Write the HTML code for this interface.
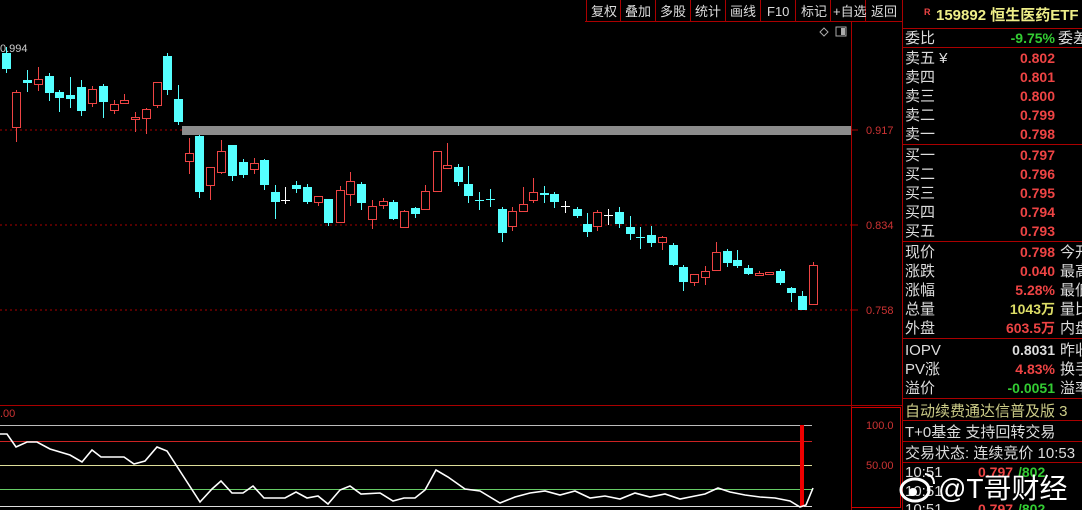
<!DOCTYPE html>
<html><head><meta charset="utf-8"><style>
body{margin:0;background:#000;width:1082px;height:510px;overflow:hidden;position:relative;font-family:"Liberation Sans","Noto Sans CJK SC",sans-serif}
svg{position:absolute;left:0;top:0}
.t{font-family:"Liberation Sans","Noto Sans CJK SC",sans-serif}
</style></head><body>
<svg id="s" width="1082" height="510" xmlns="http://www.w3.org/2000/svg">
<!-- toolbar -->
<line x1="585" y1="21.5" x2="903" y2="21.5" stroke="#a00" />
<g stroke="#a00"><line x1="586.5" y1="0" x2="586.5" y2="21"/><line x1="620.5" y1="0" x2="620.5" y2="21"/><line x1="655.5" y1="0" x2="655.5" y2="21"/><line x1="690.5" y1="0" x2="690.5" y2="21"/><line x1="725.5" y1="0" x2="725.5" y2="21"/><line x1="760.5" y1="0" x2="760.5" y2="21"/><line x1="795.5" y1="0" x2="795.5" y2="21"/><line x1="830.5" y1="0" x2="830.5" y2="21"/><line x1="865.5" y1="0" x2="865.5" y2="21"/></g>
<g fill="#ddd" font-size="13" class="t"><text x="591" y="16">复权</text><text x="625" y="16">叠加</text><text x="660" y="16">多股</text><text x="695" y="16">统计</text><text x="730" y="16">画线</text><text x="767" y="16">F10</text><text x="801" y="16">标记</text><text x="833" y="16">+自选</text><text x="871" y="16">返回</text></g>
<!-- chart frame -->
<line x1="851.5" y1="22" x2="851.5" y2="510" stroke="#a00"/>
<line x1="902.5" y1="0" x2="902.5" y2="510" stroke="#a00"/>
<g stroke="#a00" stroke-dasharray="2,3"><line x1="0" y1="130" x2="851" y2="130"/><line x1="0" y1="225" x2="851" y2="225"/><line x1="0" y1="310" x2="851" y2="310"/></g>
<g stroke="#a00"><line x1="851" y1="130" x2="858" y2="130"/><line x1="851" y1="225" x2="858" y2="225"/><line x1="851" y1="310" x2="858" y2="310"/></g>
<g fill="#c33" font-size="11" class="t"><text x="866" y="134">0.917</text><text x="866" y="229">0.834</text><text x="866" y="314">0.758</text></g>
<text x="0" y="52" fill="#ccc" font-size="11" class="t">0.994</text>
<path d="M824 28 L828 32 L824 36 L820 32Z" fill="none" stroke="#aaa"/>
<rect x="836" y="27" width="10" height="9" fill="none" stroke="#aaa"/><rect x="841" y="28" width="4" height="7" fill="#aaa"/>
<g id="c"></g>
<rect x="182" y="126" width="669" height="9" fill="#8c8c8c"/>
<!-- indicator -->
<line x1="0" y1="405.5" x2="903" y2="405.5" stroke="#a00"/>
<line x1="0" y1="425.5" x2="812" y2="425.5" stroke="#bbb"/>
<line x1="0" y1="441.5" x2="812" y2="441.5" stroke="#c22"/>
<line x1="0" y1="465.5" x2="812" y2="465.5" stroke="#dd9"/>
<line x1="0" y1="489.5" x2="812" y2="489.5" stroke="#6c6"/>
<line x1="0" y1="506.5" x2="812" y2="506.5" stroke="#ddd"/>
<text x="0" y="417" fill="#c33" font-size="11" class="t">.00</text>
<rect x="851.5" y="407.5" width="49" height="100" fill="none" stroke="#c00"/>
<g fill="#c33" font-size="11" class="t"><text x="866" y="429">100.0</text><text x="866" y="469">50.00</text></g>
<rect x="800" y="425" width="4" height="82" fill="#e00"/>
<polyline fill="none" stroke="#fff" stroke-width="1.6" points="0,434 7,434 16,447 27,442 37,442 50,449 70,455 82,462 92,450 101,457 124,457 134,464 145,461 157,447 167,451 200,502 212,489 221,481 232,493 243,493 253,486 264,498 285,498 296,492 307,498 318,496 328,504 340,490 350,486 361,494 380,493 393,501 404,498 415,498 425,490 436,470 448,477 465,489 480,491 500,503 515,497 530,493 545,491 560,495 575,491 590,498 605,496 620,499 635,493 650,497 665,494 680,499 695,496 705,494 718,488 730,492 745,495 760,497 775,498 790,501 800,507 806,505 813,488"/>
<!-- right panel -->
<g stroke="#a00"><line x1="903" y1="28.5" x2="1082" y2="28.5"/><line x1="903" y1="47.5" x2="1082" y2="47.5"/><line x1="903" y1="144.5" x2="1082" y2="144.5"/><line x1="903" y1="241.5" x2="1082" y2="241.5"/><line x1="903" y1="338.5" x2="1082" y2="338.5"/><line x1="903" y1="398.5" x2="1082" y2="398.5"/><line x1="903" y1="420.5" x2="1082" y2="420.5"/><line x1="903" y1="441.5" x2="1082" y2="441.5"/><line x1="903" y1="462.5" x2="1082" y2="462.5"/></g>
<text x="924" y="15" fill="#e44" font-size="9" font-weight="bold" class="t">R</text>
<text x="936" y="20" fill="#ee8" font-size="15" font-weight="bold" class="t">159892 恒生医药ETF</text>
<g fill="#ddd" font-size="15" class="t">
<text x="905" y="43">委比</text><text x="1058" y="43">委差</text>
<text x="905" y="63">卖五 ¥</text><text x="905" y="82">卖四</text><text x="905" y="101">卖三</text><text x="905" y="120">卖二</text><text x="905" y="139">卖一</text>
<text x="905" y="160">买一</text><text x="905" y="179">买二</text><text x="905" y="198">买三</text><text x="905" y="217">买四</text><text x="905" y="236">买五</text>
<text x="905" y="257">现价</text><text x="905" y="276">涨跌</text><text x="905" y="295">涨幅</text><text x="905" y="314">总量</text><text x="905" y="333">外盘</text>
<text x="1060" y="257">今开</text><text x="1060" y="276">最高</text><text x="1060" y="295">最低</text><text x="1060" y="314">量比</text><text x="1060" y="333">内盘</text>
<text x="905" y="355">IOPV</text><text x="905" y="374">PV涨</text><text x="905" y="393">溢价</text>
<text x="1060" y="355">昨收</text><text x="1060" y="374">换手</text><text x="1060" y="393">溢率</text>
<text x="905" y="437">T+0基金 支持回转交易</text>
<text x="905" y="458">交易状态: 连续竞价 10:53</text>
<text x="905" y="477">10:51</text><text x="905" y="496">10:51</text><text x="905" y="514">10:51</text>
</g>
<text x="905" y="416" fill="#cc8" font-size="15" class="t">自动续费通达信普及版 3</text>
<g font-size="14" font-weight="bold" text-anchor="end" class="t">
<text x="1055" y="43" fill="#3c3">-9.75%</text>
<g fill="#e44"><text x="1055" y="63">0.802</text><text x="1055" y="82">0.801</text><text x="1055" y="101">0.800</text><text x="1055" y="120">0.799</text><text x="1055" y="139">0.798</text>
<text x="1055" y="160">0.797</text><text x="1055" y="179">0.796</text><text x="1055" y="198">0.795</text><text x="1055" y="217">0.794</text><text x="1055" y="236">0.793</text>
<text x="1055" y="257">0.798</text><text x="1055" y="276">0.040</text><text x="1055" y="295">5.28%</text><text x="1055" y="333">603.5万</text><text x="1055" y="374">4.83%</text></g>
<text x="1055" y="314" fill="#dd6">1043万</text>
<text x="1055" y="355" fill="#ddd">0.8031</text>
<text x="1055" y="393" fill="#3c3">-0.0051</text>
</g>
<g font-size="14" font-weight="bold" class="t"><text x="978" y="477" fill="#e44">0.797</text><text x="1018" y="477" fill="#3c3">/802</text><text x="978" y="514" fill="#e44">0.797</text><text x="1018" y="514" fill="#3c3">/802</text></g>
<!-- watermark -->
<ellipse cx="915" cy="490" rx="14" ry="11" fill="none" stroke="#fff" stroke-width="3"/>
<circle cx="913" cy="492" r="4" fill="#fff"/>
<path d="M925 474 Q934 475 934 484" fill="none" stroke="#fff" stroke-width="2"/>
<text x="938" y="498" fill="#fff" font-size="28" class="t">@T哥财经</text>
</svg>
<script>
var d=[[6,47,73,53,69,'c'],[16,90,142,92,127,'r'],[27,70,92,80,83,'c'],[38,67,91,79,84,'r'],[49,73,101,76,93,'c'],[59,90,112,92,98,'c'],[70,77,108,95,99,'c'],[81,80,116,87,111,'c'],[92,86,107,89,103,'r'],[103,84,118,86,102,'c'],[114,100,114,104,110,'r'],[124,94,104,100,103,'r'],[135,112,132,117,119,'r'],[146,108,134,109,118,'r'],[157,82,108,82,105,'r'],[167,53,95,56,90,'c'],[178,85,125,99,122,'c'],[189,138,174,153,161,'r'],[199,135,198,136,192,'c'],[210,167,200,167,185,'r'],[221,140,174,151,172,'r'],[232,145,181,145,176,'c'],[243,159,178,162,175,'c'],[254,158,174,163,169,'r'],[264,159,190,160,185,'c'],[275,185,219,192,202,'c'],[285,187,204,200,201,'w'],[296,181,193,185,189,'c'],[307,184,204,187,202,'c'],[318,196,206,196,202,'r'],[328,199,226,199,223,'c'],[340,186,222,190,222,'r'],[350,172,206,181,194,'r'],[361,182,210,184,203,'c'],[372,200,229,206,219,'r'],[383,198,209,201,205,'r'],[393,200,220,202,219,'c'],[404,210,228,211,227,'r'],[415,207,218,208,214,'c'],[425,185,209,191,209,'r'],[437,151,191,151,191,'r'],[447,143,168,165,168,'r'],[458,164,186,167,182,'c'],[468,166,203,184,196,'c'],[479,192,210,200,201,'c'],[490,189,207,199,200,'c'],[502,207,242,209,233,'c'],[512,207,231,211,226,'r'],[523,187,211,204,211,'r'],[533,178,203,192,200,'r'],[544,186,203,193,195,'c'],[554,192,208,194,202,'c'],[565,201,213,206,207,'w'],[577,207,218,209,216,'c'],[587,213,237,224,232,'c'],[597,210,231,212,226,'r'],[608,209,225,215,216,'w'],[619,207,228,212,224,'c'],[630,216,240,227,234,'c'],[640,227,249,237,238,'c'],[651,226,247,235,243,'c'],[662,236,250,237,242,'r'],[673,243,266,245,265,'c'],[683,265,291,267,282,'c'],[694,274,286,274,282,'r'],[705,266,285,271,277,'r'],[716,242,270,252,270,'r'],[727,249,267,251,263,'c'],[737,250,268,260,266,'c'],[748,265,275,268,274,'c'],[759,271,276,273,275,'r'],[769,272,275,272,274,'r'],[780,269,285,271,283,'c'],[791,287,302,288,293,'c'],[802,291,310,296,310,'c'],[813,262,304,265,304,'r']];
var h='';d.forEach(function(c){var x=c[0],col=c[5]=='c'?'#5ff':c[5]=='r'?'#e44':'#fff';
h+='<line x1="'+(x+.5)+'" y1="'+c[1]+'" x2="'+(x+.5)+'" y2="'+c[2]+'" stroke="'+col+'"/>';
var bh=Math.max(1,c[4]-c[3]);
if(c[5]=='c')h+='<rect x="'+(x-4)+'" y="'+c[3]+'" width="9" height="'+bh+'" fill="#5ff"/>';
else if(c[5]=='r')h+='<rect x="'+(x-3.5)+'" y="'+(c[3]+.5)+'" width="8" height="'+bh+'" fill="#000" stroke="#e44"/>';
else h+='<line x1="'+(x-4)+'" y1="'+(c[3]+.5)+'" x2="'+(x+5)+'" y2="'+(c[3]+.5)+'" stroke="#fff"/>';});
document.getElementById('c').innerHTML=h;
</script>
</body></html>
